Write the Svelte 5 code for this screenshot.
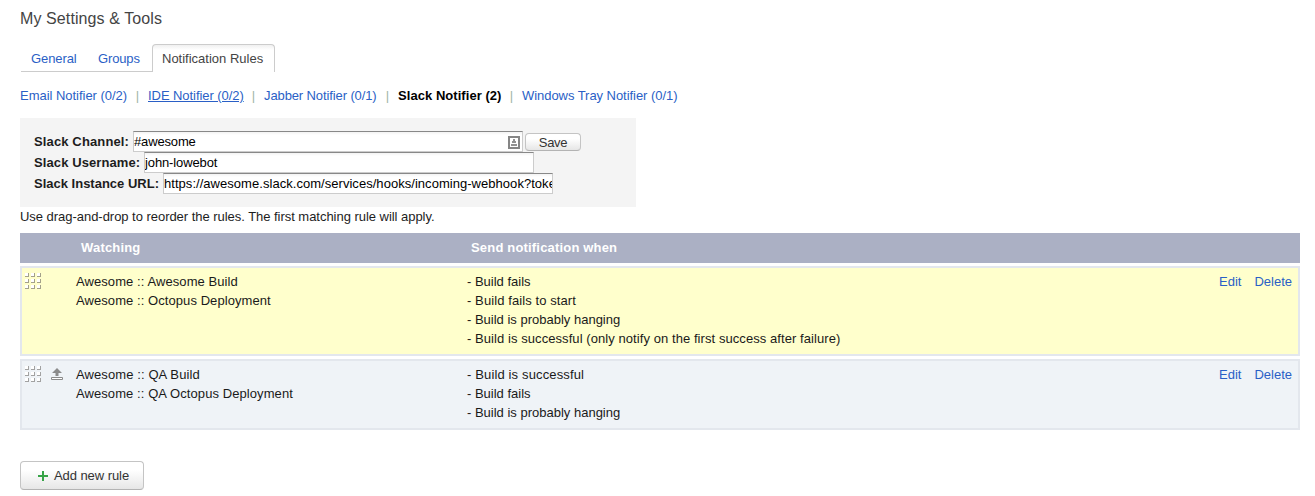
<script>
  const notifiers = [
    { label: 'Email Notifier (0/2)', state: '', width: 107, spacing: -0.03 },
    { label: 'IDE Notifier (0/2)', state: 'hovered', width: 95, spacing: -0.06 },
    { label: 'Jabber Notifier (0/1)', state: '', width: 113, spacing: -0.11 },
    { label: 'Slack Notifier (2)', state: 'current', width: 103, spacing: 0.05 },
    { label: 'Windows Tray Notifier (0/1)', state: '', width: 156, spacing: -0.05 }
  ];

  const rules = [
    {
      highlighted: true,
      movable: false,
      watching: [
        { text: 'Awesome :: Awesome Build', spacing: 0.08 },
        { text: 'Awesome :: Octopus Deployment', spacing: 0.07 }
      ],
      events: [
        { text: 'Build fails', spacing: 0 },
        { text: 'Build fails to start', spacing: 0.09 },
        { text: 'Build is probably hanging', spacing: 0 },
        { text: 'Build is successful (only notify on the first success after failure)', spacing: 0.07 }
      ]
    },
    {
      highlighted: false,
      movable: true,
      watching: [
        { text: 'Awesome :: QA Build', spacing: 0.1 },
        { text: 'Awesome :: QA Octopus Deployment', spacing: 0.08 }
      ],
      events: [
        { text: 'Build is successful', spacing: 0.14 },
        { text: 'Build fails', spacing: 0 },
        { text: 'Build is probably hanging', spacing: 0 }
      ]
    }
  ];

  const dots = [0, 6, 12].flatMap((y) => [0, 6, 12].map((x) => ({ x, y })));
</script>

<main>
  <h1>My Settings &amp; Tools</h1>

  <nav class="tabs">
    <span class="tab general">General</span>
    <span class="tab groups">Groups</span>
    <span class="tab active">Notification Rules</span>
  </nav>

  <nav class="notifiers">
    {#each notifiers as n, i}
      {#if i > 0}<span class="sep">|</span>{/if}
      <span class="notifier {n.state}" style:width="{n.width}px" style:letter-spacing="{n.spacing}px">{n.label}</span>
    {/each}
  </nav>

  <section class="panel">
    <div class="field">
      <span class="label channel">Slack Channel:</span>
      <div class="input">
        <span class="channel-value">#awesome</span>
        <svg class="card" width="12" height="13" viewBox="0 0 12 13">
          <rect x="1" y="1" width="10" height="11" fill="#fff" stroke="#858585" stroke-width="2" />
          <path d="M5 3h2v2h1v2H4V5h1zM3 8h6v2H3z" fill="#929292" />
        </svg>
      </div>
      <button class="save">Save</button>
    </div>
    <div class="field">
      <span class="label username">Slack Username:</span>
      <div class="input"><span class="username-value">john-lowebot</span></div>
    </div>
    <div class="field">
      <span class="label instance">Slack Instance URL:</span>
      <div class="input"><span class="url">https://awesome.slack.com/services/hooks/incoming-webhook?toke</span></div>
    </div>
  </section>

  <p class="hint">Use drag-and-drop to reorder the rules. The first matching rule will apply.</p>

  <div class="head">
    <span class="h-watching">Watching</span>
    <span class="h-events">Send notification when</span>
  </div>

  {#each rules as rule}
    <div class="rule" class:highlighted={rule.highlighted}>
      <div class="tools">
        <svg width="17" height="17" viewBox="0 0 17 17" shape-rendering="crispEdges">
          {#each dots as d}
            <path d="M{d.x} {d.y}h3v3h-3z" fill="#fff" />
            <path d="M{d.x + 3} {d.y}h1v4h-4v-1h3z" fill={rule.highlighted ? '#a3a18a' : '#a2a2a2'} />
          {/each}
        </svg>
        {#if rule.movable}
          <svg class="top" width="12" height="12" viewBox="0 0 12 12">
            <path d="M6 0 11 5H7.5V8h-3V5H1z" fill="#8b8b8b" />
            <path d="M.5 9.5h11v2H.5z" fill="#fff" stroke="#8b8b8b" />
          </svg>
        {/if}
      </div>
      <div class="watching">
        {#each rule.watching as w}<div style:letter-spacing="{w.spacing}px">{w.text}</div>{/each}
      </div>
      <div class="events">
        {#each rule.events as e}<div style:letter-spacing="{e.spacing}px">- {e.text}</div>{/each}
      </div>
      <div class="actions"><span>Edit</span><span>Delete</span></div>
    </div>
  {/each}

  <button class="add">
    <svg width="10" height="10" viewBox="0 0 10 10"><path d="M4 0h2v4h4v2H6v4H4V6H0V4h4z" fill="#37a447" /></svg>
    <span>Add new rule</span>
  </button>
</main>

<style>
  :global(body) {
    margin: 0;
    background: #fff;
  }

  main {
    box-sizing: border-box;
    width: 1315px;
    height: 496px;
    overflow: hidden;
    padding: 8px 15px 0 20px;
    font: 13px/19px 'Liberation Sans', Arial, sans-serif;
    color: #1d1d1d;
    white-space: nowrap;
  }

  h1 {
    margin: 0;
    height: 36px;
    padding-top: 1px;
    box-sizing: border-box;
    font-size: 16px;
    line-height: 20px;
    font-weight: 400;
    letter-spacing: 0.1px;
    color: #444;
  }

  .tabs {
    display: flex;
    height: 28px;
    padding-left: 1px;
  }

  .tab {
    box-sizing: border-box;
    padding-top: 5px;
    border-bottom: 1px solid #ccc;
    color: #2a5fc6;
  }

  .general {
    width: 67px;
    padding-left: 10px;
    letter-spacing: -0.1px;
  }

  .groups {
    width: 64px;
    padding-left: 10px;
    letter-spacing: -0.15px;
  }

  .active {
    width: 123px;
    padding: 4px 0 0 9px;
    border: 1px solid #ccc;
    border-bottom: 0;
    border-radius: 4px 4px 0 0;
    background: linear-gradient(#f0f0f0, #fff 5px);
    color: #444;
  }

  .notifiers {
    display: flex;
    height: 19px;
    margin-top: 14px;
    color: #2a5fc6;
  }

  .sep {
    width: 21px;
    text-align: center;
    color: #a0b5a5;
  }

  .hovered {
    text-decoration: underline;
  }

  .current {
    font-weight: 700;
    color: #000;
  }

  .panel {
    box-sizing: border-box;
    width: 616px;
    height: 89px;
    margin-top: 13px;
    padding: 13px 14px;
    background: #f4f4f4;
  }

  .field {
    display: flex;
    height: 21px;
    line-height: 21px;
  }

  .label {
    font-weight: 700;
  }

  .channel {
    width: 99px;
    letter-spacing: 0.13px;
  }

  .username {
    width: 110px;
    letter-spacing: 0.1px;
  }

  .instance {
    width: 129px;
  }

  .input {
    box-sizing: border-box;
    display: flex;
    justify-content: space-between;
    width: 390px;
    height: 21px;
    overflow: hidden;
    border: 1px solid #ccc;
    border-top-color: #888;
    background: linear-gradient(#f3f3f3, #fff 3px);
    line-height: 19px;
    color: #000;
  }

  .channel-value {
    letter-spacing: -0.15px;
  }

  .username-value {
    letter-spacing: -0.12px;
  }

  .url {
    letter-spacing: 0.04px;
  }

  .card {
    margin: 4px 2px 0 0;
  }

  button {
    box-sizing: border-box;
    border: 1px solid #c4c4c4;
    border-bottom-color: #b3b3b3;
    background: linear-gradient(#fff 30%, #e6e6e6);
    font: inherit;
    color: #333;
  }

  .save {
    width: 56px;
    height: 18px;
    margin: 2px 0 0 2px;
    padding: 0;
    border-radius: 4px;
    line-height: 18px;
    letter-spacing: -0.3px;
  }

  .hint {
    margin: 0;
    height: 26px;
    letter-spacing: -0.035px;
  }

  .head {
    display: flex;
    width: 1280px;
    height: 30px;
    background: #abb0c4;
    color: #fff;
    font-weight: 700;
    line-height: 29px;
    letter-spacing: 0.18px;
  }

  .h-watching {
    width: 390px;
    padding-left: 61px;
  }

  .rule {
    box-sizing: border-box;
    display: flex;
    width: 1280px;
    margin-top: 3px;
    padding: 4px 6px 6px 3px;
    border: 2px solid #e3e7ed;
    background: #eff3f7;
    color: #1a1a1a;
  }

  .highlighted {
    background: #ffc;
  }

  .tools {
    display: flex;
    width: 51px;
    padding-top: 1px;
  }

  .top {
    margin: 2px 0 0 9px;
  }

  .watching {
    width: 391px;
  }

  .events {
    flex: 1;
  }

  .actions {
    display: flex;
    gap: 13px;
    color: #2a5fc6;
  }

  .add {
    display: flex;
    align-items: center;
    width: 124px;
    height: 29px;
    margin-top: 31px;
    padding: 0 0 0 17px;
    gap: 6px;
    border-radius: 4px;
    letter-spacing: -0.07px;
  }
</style>
